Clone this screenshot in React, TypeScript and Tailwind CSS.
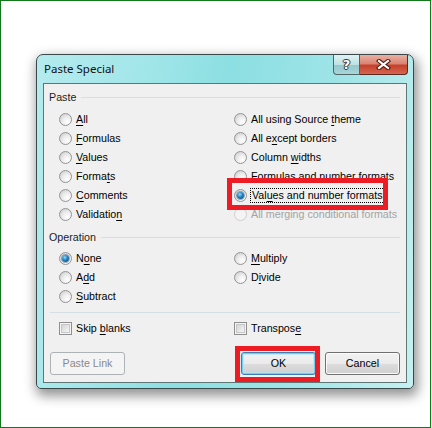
import React from "react";

type Item = { text: string; u?: number; checked?: boolean; disabled?: boolean; focus?: boolean };

const PASTE_LEFT: Item[] = [
  { text: "All", u: 0 },
  { text: "Formulas", u: 0 },
  { text: "Values", u: 0 },
  { text: "Formats", u: 5 },
  { text: "Comments", u: 0 },
  { text: "Validation", u: 9 },
];

const PASTE_RIGHT: Item[] = [
  { text: "All using Source theme", u: 17 },
  { text: "All except borders", u: 5 },
  { text: "Column widths", u: 7 },
  { text: "Formulas and number formats", u: 2 },
  { text: "Values and number formats", u: 3, checked: true, focus: true },
  { text: "All merging conditional formats", disabled: true },
];

const OP_LEFT: Item[] = [
  { text: "None", u: 1, checked: true },
  { text: "Add", u: 1 },
  { text: "Subtract", u: 0 },
];

const OP_RIGHT: Item[] = [
  { text: "Multiply", u: 0 },
  { text: "Divide", u: 1 },
];

function Label({ text, u }: { text: string; u?: number }) {
  if (u === undefined) return <>{text}</>;
  return (
    <>
      {text.slice(0, u)}
      <span className="underline underline-offset-[2px]">{text[u]}</span>
      {text.slice(u + 1)}
    </>
  );
}

function Radio({ item }: { item: Item }) {
  return (
    <div className="flex h-[19px] items-center gap-[3px]">
      <span
        className={
          item.disabled
            ? "flex size-[13px] shrink-0 items-center justify-center rounded-full border border-[#cfcfcf] bg-[#f4f4f4]"
            : "flex size-[13px] shrink-0 items-center justify-center rounded-full border border-[#959595] bg-[radial-gradient(circle_at_68%_72%,#ffffff_0%,#ececec_45%,#c6c6c6_100%)]"
        }
      >
        {item.checked && (
          <span className="size-[7px] rounded-full bg-[radial-gradient(circle_at_40%_35%,#8fdcff_0%,#1f7fc0_45%,#083c6a_100%)] shadow-[0_0_0_1px_rgba(20,60,100,0.4)]" />
        )}
      </span>
      <span
        className={
          (item.disabled ? "text-[#a3a3a3] " : "text-black ") +
          (item.focus ? "border border-dotted border-black px-[1px] leading-[13px]" : "px-[1px]")
        }
      >
        <Label text={item.text} u={item.u} />
      </span>
    </div>
  );
}

function Check({ text, u }: { text: string; u: number }) {
  return (
    <div className="flex h-[19px] items-center gap-[3px]">
      <span className="flex size-[13px] shrink-0 items-center justify-center border border-[#8e8f8f] bg-[#f4f4f4]">
        <span className="size-[9px] border border-[#c7c7c7] bg-[linear-gradient(135deg,#d4d4d4_0%,#f6f6f6_100%)]" />
      </span>
      <span className="px-[1px]">
        <Label text={text} u={u} />
      </span>
    </div>
  );
}

function GroupHeader({ title }: { title: string }) {
  return (
    <div className="flex h-[14px] items-center pl-[5px] pr-[6px]">
      <span className="text-[#1c1c1c]">{title}</span>
      <span className="ml-[5px] h-px flex-1 bg-[#d5dfe5]" />
    </div>
  );
}

function Btn({ children, primary, disabled }: { children: React.ReactNode; primary?: boolean; disabled?: boolean }) {
  let cls =
    "flex h-[23px] w-[75px] items-center justify-center rounded-[3px] border ";
  if (disabled) cls += "border-[#adb2b5] bg-[#f4f4f4] text-[#8a8a8a]";
  else if (primary)
    cls +=
      "border-[#3c7fb1] bg-[linear-gradient(to_bottom,#f2f2f2_0%,#ebebeb_50%,#dddddd_51%,#cfcfcf_100%)] shadow-[inset_0_0_0_1px_#6fd0f5,inset_0_0_0_2px_rgba(170,230,250,0.6)] text-black";
  else
    cls +=
      "border-[#707070] bg-[linear-gradient(to_bottom,#f2f2f2_0%,#ebebeb_50%,#dddddd_51%,#cfcfcf_100%)] shadow-[inset_0_0_0_1px_#fbfbfb] text-black";
  return <div className={cls}>{children}</div>;
}

export default function App() {
  return (
    <div className="relative h-[428px] w-[431px] border border-[#12791a] bg-white pl-[35px] pt-[53px] font-['Liberation_Sans',Arial,sans-serif] text-[10.7px] text-black">
      {/* Dialog frame */}
      <div className="flex h-[335px] w-[378px] flex-col rounded-t-[7px] rounded-b-[5px] border border-[#3b4849] bg-[linear-gradient(100deg,#b4ebee_0%,#a2e6e9_25%,#8cdfe2_45%,#9ee4e7_70%,#c6f0f1_100%)] shadow-[2px_5px_12px_2px_rgba(0,0,0,0.42)]">
        {/* Title bar */}
        <div className="flex h-[28px] justify-between">
          <span className="self-center pl-[7px] font-['Noto_Sans',sans-serif] text-[11.5px] text-[#111]">
            Paste Special
          </span>
          <div className="mr-[5px] flex h-[20px] self-start">
            <div className="flex w-[27px] items-center justify-center rounded-bl-[4px] border border-t-0 border-[#4f6668] bg-[linear-gradient(to_bottom,#dff2f3_0%,#bfe1e3_50%,#94c6ca_51%,#a9d6d9_100%)]">
              <span className="font-['DejaVu_Sans',sans-serif] text-[13px] font-bold leading-none text-white [text-shadow:0_0_1px_#2c3b3c,1px_0_0_#2c3b3c,-1px_0_0_#2c3b3c,0_1px_0_#2c3b3c,0_-1px_0_#2c3b3c]">
                ?
              </span>
            </div>
            <div className="flex w-[48px] items-center justify-center rounded-br-[4px] border border-t-0 border-l-0 border-[#5b2a22] bg-[linear-gradient(to_bottom,#eab0a3_0%,#d98573_45%,#c4422c_55%,#d8644f_100%)]">
              <svg width="15" height="11" viewBox="0 0 15 11">
                <path d="M3 2 L12 9 M12 2 L3 9" stroke="#4a1a12" strokeWidth="4.2" strokeLinecap="square" />
                <path d="M3 2 L12 9 M12 2 L3 9" stroke="#ffffff" strokeWidth="2.2" strokeLinecap="square" />
              </svg>
            </div>
          </div>
        </div>

        {/* Client area */}
        <div className="ml-[6px] flex h-[300px] w-[364px] flex-col border border-[#5f7677] bg-[#f0f0f0]">
          <div className="mt-[6px]">
            <GroupHeader title="Paste" />
          </div>
          <div className="mt-[6px] grid grid-cols-[175px_1fr] pl-[15px]">
            <div className="flex flex-col">
              {PASTE_LEFT.map((it) => (
                <Radio key={it.text} item={it} />
              ))}
            </div>
            <div className="flex flex-col">
              {PASTE_RIGHT.map((it) => (
                <Radio key={it.text} item={it} />
              ))}
            </div>
          </div>

          <div className="mt-[6px]">
            <GroupHeader title="Operation" />
          </div>
          <div className="mt-[5px] grid grid-cols-[175px_1fr] pl-[15px]">
            <div className="flex flex-col">
              {OP_LEFT.map((it) => (
                <Radio key={it.text} item={it} />
              ))}
            </div>
            <div className="flex flex-col">
              {OP_RIGHT.map((it) => (
                <Radio key={it.text} item={it} />
              ))}
            </div>
          </div>

          <div className="mx-[6px] mt-[6px] h-px bg-[#d5dfe5]" />

          <div className="mt-[6px] grid grid-cols-[175px_1fr] pl-[15px]">
            <Check text="Skip blanks" u={5} />
            <Check text="Transpose" u={8} />
          </div>

          <div className="mt-[14px] flex justify-between px-[6px]">
            <Btn disabled>
              <Label text="Paste Link" />
            </Btn>
            <div className="flex gap-[9px]">
              <Btn primary>OK</Btn>
              <Btn>Cancel</Btn>
            </div>
          </div>
        </div>
      </div>

      {/* Annotation boxes */}
      <div className="absolute left-[226px] top-[177px] h-[32px] w-[161px] border-[5px] border-[#ed1c24]" />
      <div className="absolute left-[234px] top-[345px] h-[36px] w-[85px] border-[5px] border-[#ed1c24]" />
    </div>
  );
}
